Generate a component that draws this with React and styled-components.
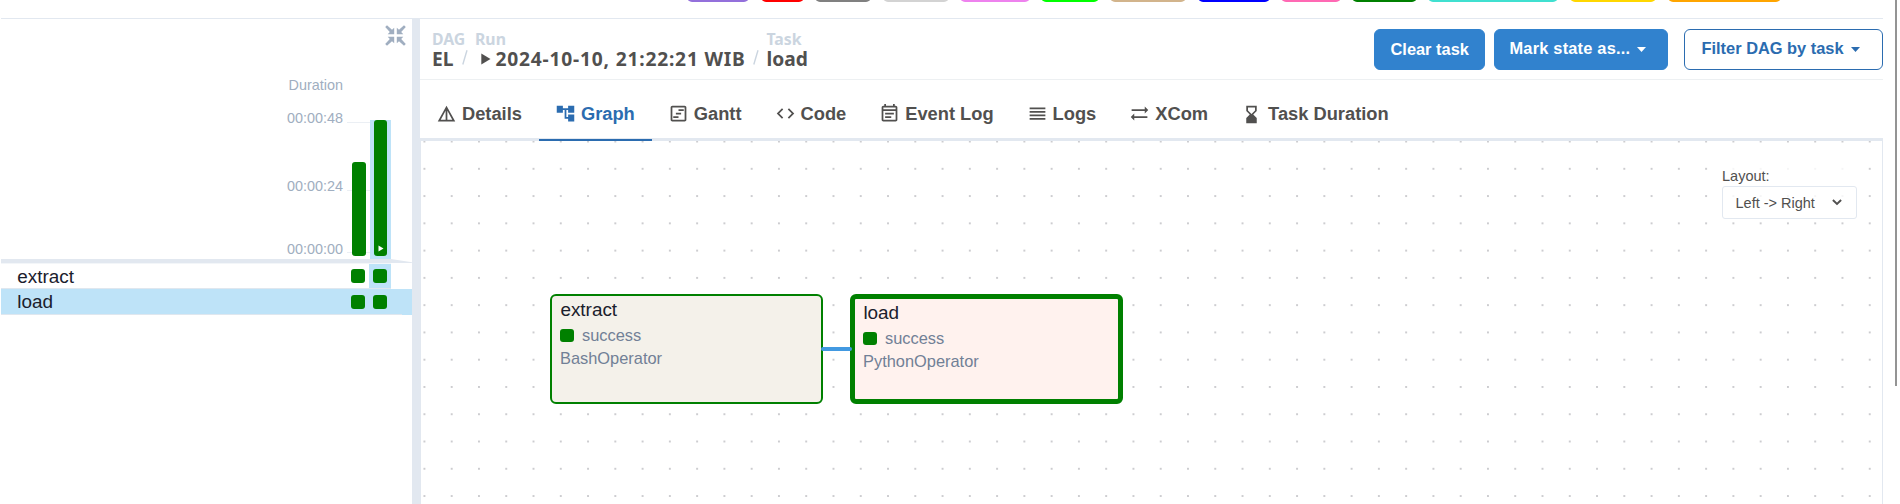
import React from "react";
import styled, { createGlobalStyle } from "styled-components";
import {
  MdDetails,
  MdAccountTree,
  MdOutlineViewTimeline,
  MdCode,
  MdOutlineEventNote,
  MdReorder,
  MdSyncAlt,
  MdHourglassBottom,
} from "react-icons/md";

const GlobalStyle = createGlobalStyle`
  * { box-sizing: border-box; }
  body { margin: 0; background: #fff; font-family: "Liberation Sans", Arial, sans-serif; overflow: hidden; }
  button { font-family: inherit; }
`;

const Page = styled.div`
  position: relative;
  display: flex;
  flex-direction: column;
  width: 1900px;
  height: 504px;
  padding: 0 17px 0 1px;
  overflow: hidden;
`;

const Scrollbar = styled.div`
  position: absolute;
  top: 0;
  right: 3px;
  width: 2px;
  height: 386px;
  background: #949494;
`;

const Legend = styled.div`
  display: flex;
  flex: none;
  gap: 11.3px;
  height: 19px;
  padding-left: 685.5px;
  border-bottom: 1px solid #e2e8f0;
`;

const Chip = styled.div`
  flex: none;
  width: ${(p) => p.$width}px;
  height: 12px;
  margin-top: -10px;
  border-radius: 5px;
  background: ${(p) => p.$color};
`;

const Main = styled.div`
  display: flex;
  flex: 1;
  min-height: 0;
`;

const GridPanel = styled.aside`
  display: flex;
  flex-direction: column;
  flex: none;
  width: 411px;
`;

const Divider = styled.div`
  flex: none;
  width: 8px;
  background: #e2e8f0;
`;

const DurationArea = styled.div`
  display: flex;
  flex: none;
  justify-content: flex-end;
  height: 240px;
  padding-right: 21px;
`;

const CollapseButton = styled.div`
  position: absolute;
  left: 384.6px;
  top: 24.6px;
  color: #a0aec0;
  svg { display: block; }
`;

const AxisLabels = styled.div`
  display: flex;
  flex-direction: column;
  align-items: flex-end;
  padding-top: 58px;
  margin-right: 4px;
`;

const AxisLabel = styled.div`
  margin-bottom: ${(p) => p.$gap || 0}px;
  font-size: 14.4px;
  line-height: 16px;
  color: #a0aec0;
`;

const Bars = styled.div`
  position: relative;
  display: flex;
  width: 44px;
  height: 139px;
  margin-top: 101px;
`;

const GridLine = styled.div`
  position: absolute;
  z-index: -1;
  left: 0;
  right: 0;
  top: ${(p) => p.$top}px;
  height: 1px;
  background: rgba(226, 232, 240, 0.7);
`;

const BarColumn = styled.div`
  display: flex;
  align-items: flex-end;
  width: ${(p) => (p.$selected ? 21 : 23)}px;
  padding: 0 4px 3px ${(p) => (p.$selected ? 4 : 5)}px;
  background: ${(p) => (p.$selected ? "#bee3f8" : "transparent")};
`;

const Bar = styled.div`
  position: relative;
  display: flex;
  align-items: flex-end;
  justify-content: center;
  width: 100%;
  height: ${(p) => p.$height}px;
  padding: 0 0 4px 1px;
  border-radius: 3px;
  background: #008000;
`;

const TaperedRule = styled.div`
  flex: none;
  height: 4px;
  background: #e2e8f0;
  clip-path: polygon(0 0, 390px 0, 100% 80%, 100% 100%, 0 100%);
`;

const ThinRule = styled.div`
  flex: none;
  width: 390px;
  height: 1px;
  background: #f3f6f9;
`;

const TaskRow = styled.div`
  display: flex;
  flex: none;
  height: ${(p) => (p.$selected ? 26 : 25)}px;
  padding-right: 21px;
  background: ${(p) => (p.$selected ? "#bee3f8" : "#fff")};
`;

const TaskRowInner = styled.div`
  display: flex;
  flex: 1;
  margin-right: ${(p) => (p.$selected ? -11 : 0)}px;
  border-bottom: 1px solid #dfe7ef;
`;

const TaskName = styled.div`
  flex: 1;
  padding: 1px 0 0 16.3px;
  font-size: 18.9px;
  line-height: 24px;
  color: #1a202c;
`;

const Cell = styled.div`
  display: flex;
  width: 22px;
  padding: ${(p) => (p.$low ? 6 : 5)}px 0 0 4px;
  margin-right: ${(p) => (p.$end ? 11 : 0)}px;
  background: ${(p) => (p.$selected ? "#bee3f8" : "transparent")};
`;

const StatusSquare = styled.span`
  display: block;
  flex: none;
  width: 14px;
  height: ${(p) => p.$height || 14}px;
  border-radius: 3px;
  background: #008000;
`;

const Details = styled.section`
  display: flex;
  flex: 1;
  flex-direction: column;
  min-width: 0;
`;

const Header = styled.header`
  display: flex;
  flex: none;
  align-items: flex-start;
  justify-content: space-between;
  height: 61px;
  padding: 10px 0 0 12px;
  border-bottom: 1px solid #edf0f2;
`;

const Breadcrumb = styled.nav`
  display: flex;
  font-family: "Noto Sans", "Open Sans", sans-serif;
`;

const Crumb = styled.div`
  width: ${(p) => p.$width}px;
  margin-top: 1px;
`;

const CrumbLabel = styled.div`
  font-size: 15.8px;
  font-weight: 700;
  line-height: 18px;
  color: #cbd5e0;
`;

const CrumbValue = styled.div`
  display: flex;
  align-items: center;
  padding-left: ${(p) => p.$indent || 0}px;
  font-size: 19.2px;
  font-weight: 700;
  line-height: 22px;
  letter-spacing: ${(p) => p.$tracking || 0}px;
  white-space: nowrap;
  color: #51504f;
  svg { flex: none; margin-right: 4.5px; }
`;

const Slash = styled.div`
  width: ${(p) => p.$width}px;
  padding-top: 21px;
  svg { display: block; }
`;

const Actions = styled.div`
  display: flex;
  height: 41px;
`;

const ActionButton = styled.button`
  display: flex;
  align-items: center;
  width: ${(p) => p.$width}px;
  height: 41px;
  margin: 0 0 0 ${(p) => p.$gap || 0}px;
  padding: 0 0 ${(p) => (p.$menu ? 2 : 0)}px ${(p) => p.$pad}px;
  border: 1px solid ${(p) => (p.$outline ? "#2b6cb0" : "#3182ce")};
  border-radius: 6px;
  background: ${(p) => (p.$outline ? "#fff" : "#3182ce")};
  color: ${(p) => (p.$outline ? "#2b6cb0" : "#fff")};
  font-size: 16.4px;
  font-weight: 700;
  letter-spacing: ${(p) => p.$tracking || 0}px;
  white-space: nowrap;
  svg { margin: 2px 0 0 7px; }
`;

const Tabs = styled.div`
  display: flex;
  flex: none;
  height: 61px;
  border-bottom: 3px solid #e2e8f0;
`;

const Tab = styled.div`
  display: flex;
  align-items: center;
  gap: ${(p) => (p.$wide ? 6 : 5)}px;
  height: 61px;
  padding: ${(p) => (p.$wide ? 9 : 8)}px 17px 0 16px;
  border-bottom: 2px solid ${(p) => (p.$active ? "#2b6cb0" : "transparent")};
  color: ${(p) => (p.$active ? "#2b6cb0" : "#51504f")};
  font-size: 18.3px;
  font-weight: 700;
  white-space: nowrap;
  svg { flex: none; width: 21px; height: 21px; }
`;

const Canvas = styled.div`
  position: relative;
  flex: 1;
  border: solid #e2e8f0;
  border-width: 0 1px;
  overflow: hidden;
`;

const DotBackground = styled.svg`
  position: absolute;
  inset: 0;
  width: 100%;
  height: 100%;
`;

const Node = styled.div`
  position: absolute;
  left: ${(p) => p.$x}px;
  top: 153px;
  width: 273px;
  height: 110px;
  padding: 1px 8px;
  border: ${(p) => (p.$selected ? 5 : 2)}px solid #008000;
  border-radius: 6px;
  background: ${(p) => p.$fill};
`;

const NodeTitle = styled.div`
  padding-left: 0.4px;
  font-size: 18.9px;
  line-height: 26px;
  color: #1a202c;
`;

const NodeState = styled.div`
  display: flex;
  align-items: center;
  gap: 8px;
  height: 24px;
  padding-top: 1px;
  font-size: 16.4px;
  color: #718096;
`;

const NodeOperator = styled.div`
  font-size: 16.4px;
  line-height: 22px;
  color: #718096;
`;

const Edge = styled.div`
  position: absolute;
  left: 400px;
  top: 206px;
  width: 31px;
  height: 4px;
  border-radius: 2px;
  background: #4299e1;
`;

const LayoutControl = styled.div`
  position: absolute;
  right: 25px;
  top: 26px;
  width: 135px;
  font-size: 14.5px;
  color: #51504f;
`;

const LayoutLabel = styled.div`
  height: 19px;
  line-height: 19px;
  background: rgba(255, 255, 255, 0.8);
`;

const LayoutSelect = styled.div`
  display: flex;
  align-items: center;
  justify-content: space-between;
  height: 33px;
  padding: 0 14px 0 12.5px;
  border: 1px solid #e2e8f0;
  border-radius: 3px;
  background: rgba(255, 255, 255, 0.8);
`;

const CHIPS = [
  ["mediumpurple", 62.8],
  ["red", 43],
  ["gray", 56.6],
  ["lightgrey", 66],
  ["violet", 69.8],
  ["lime", 57.7],
  ["tan", 76.2],
  ["blue", 72],
  ["hotpink", 59.6],
  ["green", 64.8],
  ["turquoise", 130.5],
  ["gold", 86.6],
  ["orange", 113],
];

const TABS = [
  ["Details", MdDetails],
  ["Graph", MdAccountTree],
  ["Gantt", MdOutlineViewTimeline],
  ["Code", MdCode],
  ["Event Log", MdOutlineEventNote],
  ["Logs", MdReorder],
  ["XCom", MdSyncAlt],
  ["Task Duration", MdHourglassBottom],
];

const Caret = () => (
  <svg width="9" height="5" viewBox="0 0 9 5" fill="currentColor">
    <path d="M0 0h9L4.5 5z" />
  </svg>
);

const SlashMark = () => (
  <svg width="6" height="15" viewBox="0 0 6 15">
    <path d="M5 0.3L0.8 14.5" stroke="#cbd5e0" strokeWidth="1.4" />
  </svg>
);

const CollapseIcon = () => (
  <svg width="21" height="21" viewBox="0 0 21 21" fill="currentColor">
    {[0, 90, 180, 270].map((angle) => (
      <g key={angle} transform={`rotate(${angle} 10.5 10.5)`}>
        <path d="M9.2 2.7V9.2H2.7L4.8 7L0.2 2L2 0.2L7 4.8z" />
      </g>
    ))}
  </svg>
);

const TaskNode = ({ x, name, operator, fill, selected }) => (
  <Node $x={x} $fill={fill} $selected={selected}>
    <NodeTitle>{name}</NodeTitle>
    <NodeState>
      <StatusSquare $height={13} />
      success
    </NodeState>
    <NodeOperator>{operator}</NodeOperator>
  </Node>
);

export default function App() {
  return (
    <Page>
      <GlobalStyle />
      <Legend>
        {CHIPS.map(([color, width]) => (
          <Chip key={color} $color={color} $width={width} />
        ))}
      </Legend>
      <Main>
        <GridPanel>
          <CollapseButton>
            <CollapseIcon />
          </CollapseButton>
          <DurationArea>
            <AxisLabels>
              <AxisLabel $gap={17}>Duration</AxisLabel>
              <AxisLabel $gap={52}>00:00:48</AxisLabel>
              <AxisLabel $gap={47}>00:00:24</AxisLabel>
              <AxisLabel>00:00:00</AxisLabel>
            </AxisLabels>
            <Bars>
              <BarColumn>
                <Bar $height={94} />
              </BarColumn>
              <BarColumn $selected>
                <Bar $height={136}>
                  <svg width="6" height="7" viewBox="0 0 6 7">
                    <path d="M0.5 0.5v6l5-3z" fill="#fff" />
                  </svg>
                </Bar>
              </BarColumn>
              <GridLine $top={2} />
              <GridLine $top={70} />
              <GridLine $top={132} />
            </Bars>
          </DurationArea>
          <TaperedRule />
          <ThinRule />
          <TaskRow>
            <TaskRowInner>
              <TaskName>extract</TaskName>
              <Cell>
                <StatusSquare />
              </Cell>
              <Cell $selected>
                <StatusSquare />
              </Cell>
            </TaskRowInner>
          </TaskRow>
          <TaskRow $selected>
            <TaskRowInner $selected>
              <TaskName>load</TaskName>
              <Cell $low>
                <StatusSquare />
              </Cell>
              <Cell $low $end>
                <StatusSquare />
              </Cell>
            </TaskRowInner>
          </TaskRow>
        </GridPanel>
        <Divider />
        <Details>
          <Header>
            <Breadcrumb>
              <Crumb $width={30}>
                <CrumbLabel>DAG</CrumbLabel>
                <CrumbValue>EL</CrumbValue>
              </Crumb>
              <Slash $width={13}>
                <SlashMark />
              </Slash>
              <Crumb $width={278}>
                <CrumbLabel>Run</CrumbLabel>
                <CrumbValue $indent={6} $tracking={0.8}>
                  <svg width="10" height="12" viewBox="0 0 10 12" fill="currentColor">
                    <path d="M0.3 0.5v11l9.2-5.5z" />
                  </svg>
                  2024-10-10, 21:22:21 WIB
                </CrumbValue>
              </Crumb>
              <Slash $width={13.5}>
                <SlashMark />
              </Slash>
              <Crumb>
                <CrumbLabel>Task</CrumbLabel>
                <CrumbValue>load</CrumbValue>
              </Crumb>
            </Breadcrumb>
            <Actions>
              <ActionButton $width={111} $pad={15.5}>
                Clear task
              </ActionButton>
              <ActionButton $width={174} $gap={9} $pad={14.5} $menu $tracking={0.2}>
                Mark state as...
                <Caret />
              </ActionButton>
              <ActionButton $width={199} $gap={16} $pad={16.5} $menu $outline>
                Filter DAG by task
                <Caret />
              </ActionButton>
            </Actions>
          </Header>
          <Tabs>
            {TABS.map(([label, Icon]) => (
              <Tab key={label} $active={label === "Graph"} $wide={label === "Task Duration"}>
                <Icon />
                {label}
              </Tab>
            ))}
          </Tabs>
          <Canvas>
            <DotBackground>
              <defs>
                <pattern
                  id="dots"
                  x="-10.2"
                  y="-13.1"
                  width="27.27"
                  height="27.27"
                  patternUnits="userSpaceOnUse"
                >
                  <circle cx="13.63" cy="13.63" r="0.75" fill="#81818a" />
                </pattern>
              </defs>
              <rect width="100%" height="100%" fill="url(#dots)" />
            </DotBackground>
            <TaskNode x={129} name="extract" operator="BashOperator" fill="#f4f1ea" />
            <TaskNode x={429} name="load" operator="PythonOperator" fill="#fff2ee" selected />
            <Edge />
            <LayoutControl>
              <LayoutLabel>Layout:</LayoutLabel>
              <LayoutSelect>
                Left -&gt; Right
                <svg width="10" height="7" viewBox="0 0 10 7" fill="none">
                  <path d="M0.9 1L5 5L9.1 1" stroke="#51504f" strokeWidth="1.9" />
                </svg>
              </LayoutSelect>
            </LayoutControl>
          </Canvas>
        </Details>
      </Main>
      <Scrollbar />
    </Page>
  );
}
